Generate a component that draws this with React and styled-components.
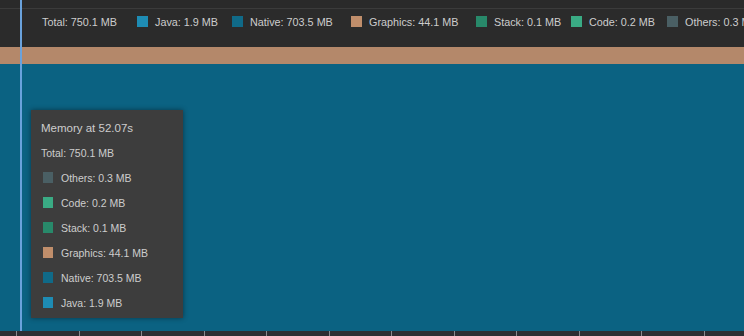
import styled, { createGlobalStyle } from "styled-components"

// slot = width of one legend entry (swatch + label + spacing)
const series = [
    { name: 'Java', value: '1.9 MB', color: '#1e8cb4', slot: 95 },
    { name: 'Native', value: '703.5 MB', color: '#106a88', slot: 119 },
    { name: 'Graphics', value: '44.1 MB', color: '#c08e6b', slot: 125 },
    { name: 'Stack', value: '0.1 MB', color: '#28896a', slot: 95 },
    { name: 'Code', value: '0.2 MB', color: '#3aab84', slot: 96 },
    { name: 'Others', value: '0.3 MB', color: '#4a5f64', slot: 90 },
]

const ticks = Array.from({ length: 12 }, (_, i) => i)

const App = () => {
    return (
        <>
            <GlobalStyle />
            <Screen>
                <TopStrip />
                <Legend>
                    <LegendItem slot={95}>
                        <LegendText>Total: 750.1 MB</LegendText>
                    </LegendItem>
                    {series.map(s => (
                        <LegendItem key={s.name} slot={s.slot}>
                            <Swatch color={s.color} />
                            <LegendText>{s.name}: {s.value}</LegendText>
                        </LegendItem>
                    ))}
                </Legend>
                <Chart>
                    <GraphicsBand />
                    <NativeArea />
                </Chart>
                <Axis>
                    {ticks.map(i => <Tick key={i} />)}
                </Axis>

                <Cursor />

                <Tooltip>
                    <TipTitle>Memory at 52.07s</TipTitle>
                    <TipRow>Total: 750.1 MB</TipRow>
                    {[...series].reverse().map(s => (
                        <TipRow key={s.name}>
                            <TipSwatch color={s.color} />
                            {s.name}: {s.value}
                        </TipRow>
                    ))}
                </Tooltip>
            </Screen>
        </>
    )
}

export default App

const GlobalStyle = createGlobalStyle`
    html, body {
        margin: 0;
        padding: 0;
        background: #2b2b2b;
    }
`

const Screen = styled.div`
    position: relative;
    width: 744px;
    height: 336px;
    overflow: hidden;
    display: flex;
    flex-direction: column;
    background: #2b2b2b;
    font-family: 'Liberation Sans', Arial, sans-serif;
    font-size: 10.5px;
    color: #cdcdcd;
`

const TopStrip = styled.div`
    height: 8px;
    background: #2a2a2a;
    border-bottom: 1px solid #3b3b3b;
`

const Legend = styled.div`
    height: 38px;
    box-sizing: border-box;
    padding: 7px 0 0 42px;
    display: flex;
    align-items: flex-start;
    white-space: nowrap;
`

const LegendItem = styled.div`
    flex: 0 0 ${props => props.slot}px;
    height: 11px;
    display: flex;
    align-items: center;
    gap: 7px;
`

const LegendText = styled.span`
    line-height: 12px;
    font-size: 10.8px;
`

const Swatch = styled.span`
    width: 11px;
    height: 11px;
    background: ${props => props.color};
`

const Chart = styled.div`
    flex: 1;
    display: flex;
    flex-direction: column;
`

const GraphicsBand = styled.div`
    height: 17px;
    background: #b4886a;
`

const NativeArea = styled.div`
    flex: 1;
    background: #0b6282;
`

const Axis = styled.div`
    height: 5px;
    background: #2e2f33;
    display: flex;
    padding-left: 16px;
    gap: 61.5px;
`

const Tick = styled.span`
    width: 1px;
    height: 5px;
    background: #8a8a8e;
`

const Cursor = styled.div`
    position: absolute;
    left: 20px;
    top: 0;
    width: 2px;
    height: 331px;
    background: #6aa2dc;
`

const Tooltip = styled.div`
    position: absolute;
    left: 31px;
    top: 110px;
    width: 152px;
    box-sizing: border-box;
    padding: 5px 0 3px 10px;
    background: #3d3d3d;
    box-shadow: 0 0 5px rgba(0, 0, 0, 0.45);
`

const TipRow = styled.div`
    height: 25px;
    display: flex;
    align-items: center;
    white-space: nowrap;
`

const TipTitle = styled(TipRow)`
    font-size: 11.5px;
`

const TipSwatch = styled.span`
    width: 10px;
    height: 11px;
    margin: 0 8px 0 2px;
    background: ${props => props.color};
`
